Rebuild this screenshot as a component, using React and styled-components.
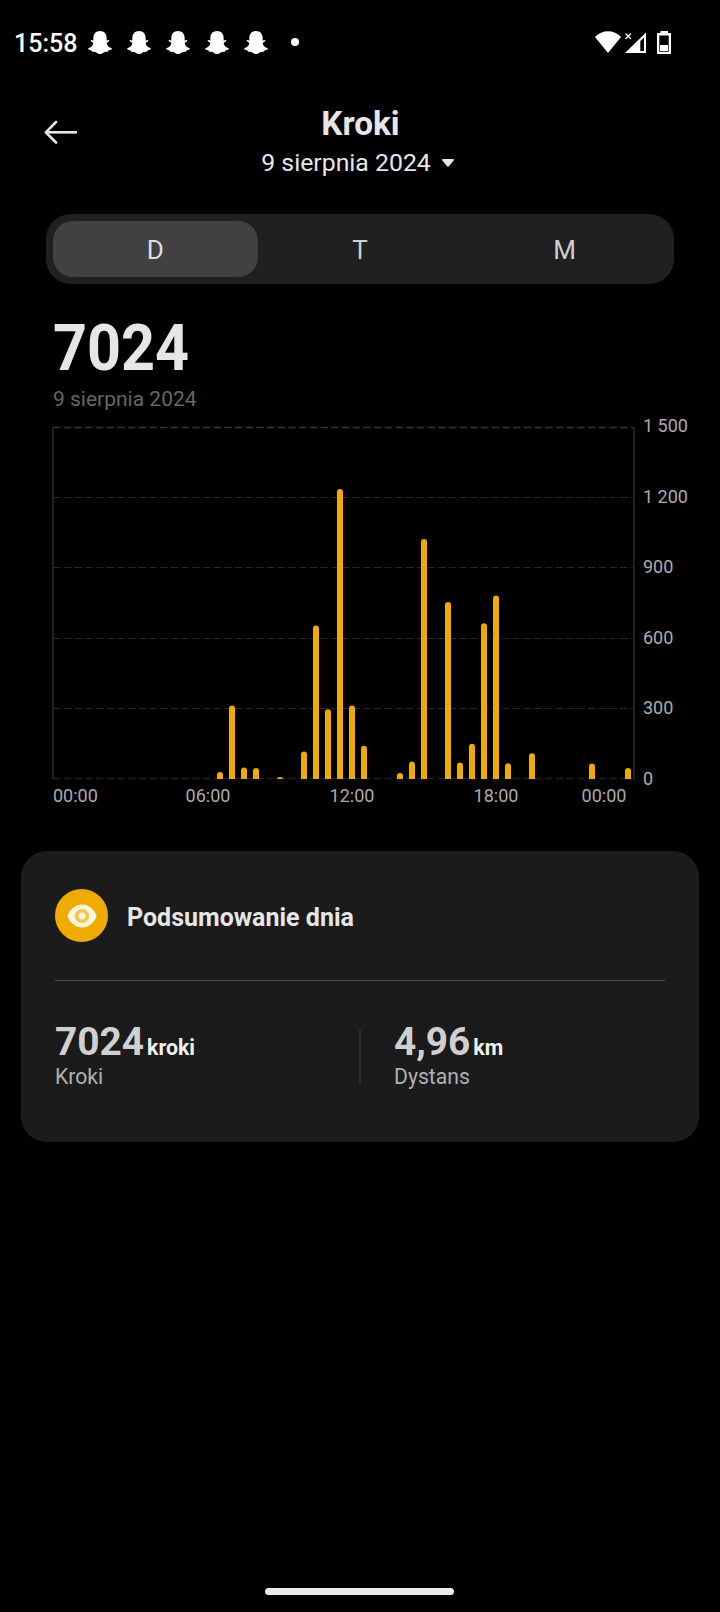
import React from 'react';
import styled, { createGlobalStyle } from 'styled-components';

const colors = {
  bg: '#000000',
  card: '#1b1b1b',
  accent: '#f0ab00',
  text: '#e6e6e6',
};

const GlobalStyle = createGlobalStyle`
  * {
    box-sizing: border-box;
  }
  body {
    margin: 0;
    background: ${colors.bg};
    font-family: Roboto, 'Liberation Sans', sans-serif;
  }
  svg {
    display: block;
    flex: none;
  }
`;

const Screen = styled.div`
  width: 720px;
  height: 1612px;
  display: flex;
  flex-direction: column;
  background: ${colors.bg};
  color: ${colors.text};
  overflow: hidden;
`;

// status bar
const StatusBar = styled.div`
  height: 85px;
  padding: 0 49px 0 14px;
  display: flex;
  align-items: center;
  color: #fff;
`;
const Time = styled.span`
  width: 74px;
  padding-top: 2px;
  font-size: 25px;
  font-weight: 500;
  line-height: 30px;
`;
const Notifications = styled.div`
  display: flex;
  gap: 15px;
`;
const Dot = styled.span`
  width: 8px;
  height: 8px;
  margin: 0 auto 1px 23px;
  border-radius: 50%;
  background: #fff;
`;
const SystemIcons = styled.div`
  display: flex;
  align-items: center;
`;

// header
const Header = styled.header`
  height: 129px;
  padding: 18px 44px 0;
  display: grid;
  grid-template-columns: 1fr auto 1fr;
`;
const BackButton = styled.button`
  margin: 17px auto 0 0;
  padding: 0;
  height: 24px;
  border: 0;
  background: none;
  color: ${colors.text};
`;
const HeaderText = styled.div`
  display: flex;
  flex-direction: column;
  align-items: center;
`;
const Title = styled.h1`
  margin: 0;
  padding-left: 1px;
  font-size: 33.3px;
  font-weight: 700;
  line-height: 42px;
`;
const DatePicker = styled.div`
  display: flex;
  align-items: center;
  gap: 11px;
  padding-right: 5px;
  font-size: 24.8px;
  line-height: 36px;
`;

// tabs
const Tabs = styled.div`
  height: 70px;
  margin: 0 46px;
  padding: 7px;
  display: flex;
  border-radius: 25px;
  background: #202020;
`;
const Tab = styled.button`
  flex: 1;
  height: 56px;
  padding: 2px 0 0;
  border: 0;
  border-radius: 20px;
  background: ${({ $active }) => ($active ? '#414141' : 'transparent')};
  color: ${({ $active }) => ($active ? '#dcdcdc' : '#cfcfcf')};
  font: 400 26px/54px Roboto, sans-serif;
`;

// total
const Total = styled.div`
  width: 160px;
  margin: 28px 0 0 53px;
  font-size: 65.5px;
  font-weight: 700;
  line-height: 72px;
  transform: scaleX(0.905);
  transform-origin: left;
`;
const TotalDate = styled.div`
  margin: 1px 0 0 53px;
  color: #666;
  font-size: 21px;
  line-height: 28px;
`;

// chart
const ChartRow = styled.div`
  height: 373px;
  margin-top: 3px;
  padding-left: 52px;
  display: flex;
`;
const YAxis = styled.div`
  height: 373px;
  margin-left: 8px;
  display: flex;
  flex-direction: column;
  justify-content: space-between;
`;
const AxisLabel = styled.span`
  color: #acacac;
  font-size: 18px;
  line-height: 20px;
  white-space: nowrap;
`;
const XAxis = styled.div`
  margin: -3px 80px 0 53px;
  display: grid;
  grid-template-columns: 83px 144px 144px 144px 72px;
  ${AxisLabel}:not(:first-child) {
    text-align: center;
  }
`;

// summary card
const Card = styled.section`
  height: 291px;
  margin: 45px 21px 0;
  padding: 38px 34px 0;
  border-radius: 26px;
  background: ${colors.card};
`;
const CardHeader = styled.div`
  height: 92px;
  display: flex;
  align-items: flex-start;
  gap: 19px;
  border-bottom: 1px solid #474747;
`;
const CardIcon = styled.div`
  width: 53px;
  height: 53px;
  display: flex;
  align-items: center;
  justify-content: center;
  border-radius: 50%;
  background: ${colors.accent};
`;
const CardTitle = styled.h2`
  margin: 0;
  padding-top: 2px;
  font-size: 25px;
  font-weight: 700;
  line-height: 53px;
`;
const Stats = styled.div`
  display: flex;
  padding-top: 39px;
`;
const Stat = styled.div`
  flex: 1;
  &:first-child {
    flex: 0 0 304px;
  }
`;
const StatDivider = styled.div`
  width: 2px;
  height: 55px;
  margin: 10px 33px 0 0;
  background: #2d2d2d;
`;
const StatValue = styled.div`
  height: 44px;
  color: #d0d0d0;
  font-size: 38.8px;
  font-weight: 700;
  line-height: 44px;
`;
const StatUnit = styled.span`
  margin-left: 3px;
  color: #f0f0f0;
  font-size: 21.3px;
  line-height: 1;
`;
const StatLabel = styled.div`
  color: #b0b0b0;
  font-size: 21.2px;
  line-height: 26px;
`;

const HomeIndicator = styled.div`
  width: 189px;
  height: 7px;
  margin: auto auto 17px 265px;
  border-radius: 4px;
  background: #eaeaea;
`;

const GhostIcon = () => (
  <svg width='24' height='23' viewBox='0 0 24 23' fill='currentColor'>
    <path d='M12 0C8 0 5.5 2.8 5.4 6.4L5.3 9.6L3.2 9C2.4 9.3 2.6 10.2 3.2 10.6L5.3 11.8C5.4 14 3.8 16 .4 17.3C-.1 17.7 0 18.2.6 18.5L3.5 19.4L4.2 20.8C5.8 21 7 20.9 8.2 21.5C9.4 22.3 10.3 23 12 23C13.7 23 14.6 22.3 15.8 21.5C17 20.9 18.2 21 19.8 20.8L20.5 19.4L23.4 18.5C24 18.2 24.1 17.7 23.6 17.3C20.2 16 18.6 14 18.7 11.8L20.8 10.6C21.4 10.2 21.6 9.3 20.8 9L18.7 9.6L18.6 6.4C18.5 2.8 16 0 12 0Z' />
  </svg>
);

const StatusIcons = () => (
  <svg width='76' height='24' viewBox='0 0 76 24' fill='currentColor'>
    <path d='M0 6C7 -1.6 19 -1.6 26 6L13 22Z' />
    <path d='M30.5 2.5l5.5 5.5M36 2.5l-5.5 5.5' stroke='currentColor' strokeWidth='1.3' />
    <path d='M51 1.5V22H30Z' />
    <path d='M45.3 10l3.7-3.5V20h-3.7Z' fill='#000' />
    <rect x='65.5' y='0' width='7.5' height='3' />
    <path fillRule='evenodd' d='M63 2H75.5Q76 2 76 2.5V22.5Q76 23 75.5 23H62.5Q62 23 62 22.5V2.5Q62 2 62.5 2ZM64.3 4.5V20.7H73.7V4.5Z' />
    <rect x='65' y='14' width='8' height='6' />
  </svg>
);

const ArrowIcon = () => (
  <svg width='34' height='24' viewBox='0 0 34 24' fill='none' stroke='currentColor' strokeWidth='2.6'>
    <path d='M12 2L1.8 12.3L12 22.5' strokeLinecap='round' strokeLinejoin='round' />
    <path d='M2 12.3H33' />
  </svg>
);

const CaretIcon = () => (
  <svg width='12' height='8' viewBox='0 0 12 8' fill='currentColor'>
    <path d='M1 0H11Q12.4 .2 11.6 1.4L7.2 7Q6 8.4 4.8 7L.4 1.4Q-.4 .2 1 0Z' />
  </svg>
);

const EyeIcon = () => (
  <svg width='30' height='24' viewBox='0 0 30 24'>
    <path d='M.3 12C3.5 4.5 8.5 .5 15 .5S26.5 4.5 29.7 12C26.5 19.5 21.5 23.5 15 23.5S3.5 19.5 .3 12Z' fill='#fff6df' />
    <circle cx='15' cy='12' r='5.3' fill='none' stroke='#f6c44c' strokeWidth='3.6' />
  </svg>
);

// one slot is half an hour
const bottom = 353;
const slotX = (slot) => 12 + slot * 12;

const ChartSvg = styled.svg`
  margin-top: 9px;
`;

const Chart = () => (
  <ChartSvg width='583' height='360' viewBox='0 -1 583 360'>
    {[1, 71, 141, 212, 282].map((y, index) => (
      <path
        key={y}
        d={`M1 ${y + 0.5}H582`}
        stroke={index === 0 ? '#363636' : '#262626'}
        strokeWidth={index === 0 ? 1.6 : 1}
        strokeDasharray='7.5 3.2'
      />
    ))}
    <path d={`M1 ${bottom - 0.5}H582`} stroke='#191919' strokeWidth='2' strokeDasharray='7.5 3.2' />
    <path d={`M1 1V${bottom}M582 1V${bottom}`} stroke='#202020' strokeWidth='2' />
    {bars.map(({ slot, height }) => {
      const x = slotX(slot) - 3;
      const r = Math.min(3, height);
      return (
        <path
          key={slot}
          fill={colors.accent}
          d={`M${x} ${bottom}V${bottom - height + r}Q${x} ${bottom - height} ${x + 3} ${bottom - height}Q${x + 6} ${bottom - height} ${x + 6} ${bottom - height + r}V${bottom}Z`}
        />
      );
    })}
  </ChartSvg>
);

const App = () => {
  return (
    <>
      <GlobalStyle />
      <Screen>
        <StatusBar>
          <Time>15:58</Time>
          <Notifications>
            {[...Array(5)].map((_, index) => (
              <GhostIcon key={index} />
            ))}
          </Notifications>
          <Dot />
          <SystemIcons>
            <StatusIcons />
          </SystemIcons>
        </StatusBar>
        <Header>
          <BackButton aria-label='Wstecz'>
            <ArrowIcon />
          </BackButton>
          <HeaderText>
            <Title>Kroki</Title>
            <DatePicker>
              9 sierpnia 2024
              <CaretIcon />
            </DatePicker>
          </HeaderText>
        </Header>
        <Tabs>
          {['D', 'T', 'M'].map((item) => (
            <Tab key={item} $active={item === 'D'}>
              {item}
            </Tab>
          ))}
        </Tabs>
        <Total>7024</Total>
        <TotalDate>9 sierpnia 2024</TotalDate>
        <ChartRow>
          <Chart />
          <YAxis>
            {['1 500', '1 200', '900', '600', '300', '0'].map((item) => (
              <AxisLabel key={item}>{item}</AxisLabel>
            ))}
          </YAxis>
        </ChartRow>
        <XAxis>
          {['00:00', '06:00', '12:00', '18:00', '00:00'].map((item, index) => (
            <AxisLabel key={index}>{item}</AxisLabel>
          ))}
        </XAxis>
        <Card>
          <CardHeader>
            <CardIcon>
              <EyeIcon />
            </CardIcon>
            <CardTitle>Podsumowanie dnia</CardTitle>
          </CardHeader>
          <Stats>
            <Stat>
              <StatValue>
                7024<StatUnit>kroki</StatUnit>
              </StatValue>
              <StatLabel>Kroki</StatLabel>
            </Stat>
            <StatDivider />
            <Stat>
              <StatValue>
                4,96<StatUnit>km</StatUnit>
              </StatValue>
              <StatLabel>Dystans</StatLabel>
            </Stat>
          </Stats>
        </Card>
        <HomeIndicator />
      </Screen>
    </>
  );
};

export default App;

const bars = [
  { slot: 13, height: 7 },
  { slot: 14, height: 73.5 },
  { slot: 15, height: 11.5 },
  { slot: 16, height: 11 },
  { slot: 18, height: 2 },
  { slot: 20, height: 27.5 },
  { slot: 21, height: 153.5 },
  { slot: 22, height: 69.7 },
  { slot: 23, height: 290 },
  { slot: 24, height: 73.5 },
  { slot: 25, height: 33.3 },
  { slot: 28, height: 6 },
  { slot: 29, height: 17.5 },
  { slot: 30, height: 240 },
  { slot: 32, height: 177 },
  { slot: 33, height: 16.5 },
  { slot: 34, height: 35.3 },
  { slot: 35, height: 155.7 },
  { slot: 36, height: 183.5 },
  { slot: 37, height: 15.7 },
  { slot: 39, height: 25.7 },
  { slot: 44, height: 15.5 },
  { slot: 47, height: 11 },
];
